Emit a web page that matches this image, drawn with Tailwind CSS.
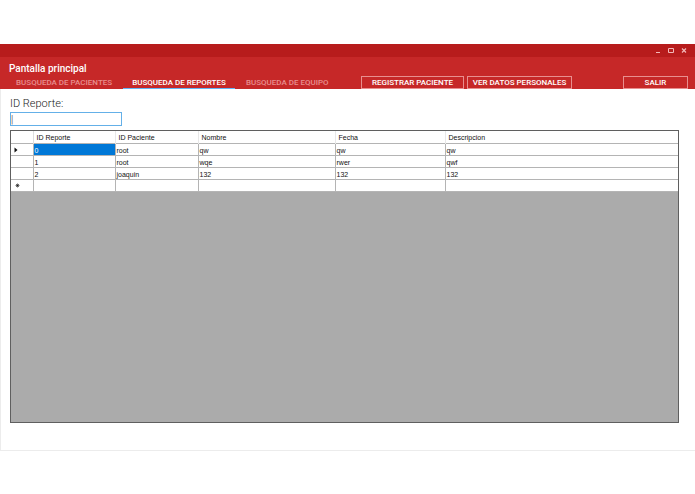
<!DOCTYPE html>
<html lang="es">

<head>
  <meta charset="UTF-8" />
  <meta name="viewport" content="width=device-width, initial-scale=1.0" />
  <title>Pantalla principal</title>
  <script src="https://cdn.jsdelivr.net/npm/@tailwindcss/browser@4"></script>
</head>

<body class="flex h-screen flex-col bg-white pt-11 pb-[43px] font-['Roboto',sans-serif]">
  <div class="flex min-h-0 flex-1 flex-col border-b border-[#ececec]">

    <!-- Title bar -->
    <div class="flex h-[13px] shrink-0 items-center justify-end gap-1 bg-[#b71c1c] pr-[6px] text-[#f3b9b9]">
      <button type="button" aria-label="Minimizar" class="flex w-[9px] justify-center">
        <svg width="7" height="7" viewBox="0 0 7 7" fill="none" stroke="currentColor" stroke-width="1"><path d="M1 5.5h4" /></svg>
      </button>
      <button type="button" aria-label="Maximizar" class="flex w-[9px] justify-center">
        <svg width="7" height="7" viewBox="0 0 7 7" fill="none" stroke="currentColor" stroke-width="1"><path d="M.5 1.5h5v4h-5z" /></svg>
      </button>
      <button type="button" aria-label="Cerrar" class="flex w-[9px] justify-center">
        <svg width="7" height="7" viewBox="0 0 7 7" fill="none" stroke="currentColor" stroke-width="1.2"><path d="M1 1.500l4 4M5 1.500l-4 4" /></svg>
      </button>
    </div>

    <!-- Header -->
    <header class="shrink-0 bg-[#c62828] text-white">
      <h1 class="pt-1 pl-[9px] text-[10px] leading-[15px] font-medium">Pantalla principal</h1>
      <div class="flex h-[13px] justify-between pr-[7px] text-[8px] leading-[13px] font-medium">
        <nav class="flex gap-[2px] pl-[7px] whitespace-nowrap">
          <a href="#" class="px-[9px] text-[#e88f8f]">BUSQUEDA DE PACIENTES</a>
          <a href="#" class="border-b border-[#64b5f6] px-[9px]">BUSQUEDA DE REPORTES</a>
          <a href="#" class="px-[9px] text-[#e88f8f]">BUSQUEDA DE EQUIPO</a>
        </nav>
        <div class="flex whitespace-nowrap">
          <button type="button" class="mr-[3px] w-[103px] border border-[#e88f8f] leading-[11px]">REGISTRAR PACIENTE</button>
          <button type="button" class="mr-[51px] w-[105px] border border-[#e88f8f] leading-[11px]">VER DATOS PERSONALES</button>
          <button type="button" class="w-[65px] border border-[#e88f8f] leading-[11px]">SALIR</button>
        </div>
      </div>
    </header>

    <main class="flex min-h-0 flex-1 flex-col border-l border-[#ececec] pt-[7px] pr-4 pb-[27px] pl-[9px]">
      <label for="idReporte" class="text-[11px] leading-[15px] font-light text-[#212121]">ID Reporte:</label>
      <input id="idReporte" type="text" value="|" class="mt-px h-[14px] w-28 border border-[#64b0e8] bg-white text-[10px] leading-3 font-light text-[#212121] outline-none" />

      <!-- Data grid -->
      <div class="mt-1 min-h-0 flex-1 border border-[#5f5f5f] bg-[#ababab]">
        <table class="w-full table-fixed border-collapse bg-white text-left font-['Liberation_Sans',sans-serif] text-[7px] leading-[8px] text-[#111]">
          <colgroup>
            <col class="w-[22px]" />
            <col class="w-[82px]" />
            <col class="w-[83px]" />
            <col class="w-[137px]" />
            <col class="w-[110px]" />
            <col />
          </colgroup>
          <thead>
            <tr class="h-3 border-b border-[#b4b4b4]">
              <th class="border-r border-[#dedede] p-0"></th>
              <th class="border-r border-[#e8e8e8] pt-[3px] pr-0 pb-0 pl-[3px] font-normal">ID Reporte</th>
              <th class="border-r border-[#e8e8e8] pt-[3px] pr-0 pb-0 pl-[3px] font-normal">ID Paciente</th>
              <th class="border-r border-[#e8e8e8] pt-[3px] pr-0 pb-0 pl-[3px] font-normal">Nombre</th>
              <th class="border-r border-[#e8e8e8] pt-[3px] pr-0 pb-0 pl-[3px] font-normal">Fecha</th>
              <th class="pt-[3px] pr-0 pb-0 pl-[3px] font-normal">Descripcion</th>
            </tr>
          </thead>
          <tbody>
            <tr class="h-3 border-b border-[#b4b4b4]">
              <td class="border-r border-[#b4b4b4] pt-px pr-0 pb-0 pl-[3px]">
                <svg width="4" height="6" viewBox="0 0 4 6" fill="currentColor"><path d="M.5 .5l3 2.500-3 2.500z" /></svg>
              </td>
              <td class="border-r border-[#b4b4b4] bg-[#0078d7] pt-[3px] pr-0 pb-0 pl-px text-white">0</td>
              <td class="border-r border-[#b4b4b4] pt-[3px] pr-0 pb-0 pl-px">root</td>
              <td class="border-r border-[#b4b4b4] pt-[3px] pr-0 pb-0 pl-px">qw</td>
              <td class="border-r border-[#b4b4b4] pt-[3px] pr-0 pb-0 pl-px">qw</td>
              <td class="pt-[3px] pr-0 pb-0 pl-px">qw</td>
            </tr>
            <tr class="h-3 border-b border-[#b4b4b4]">
              <td class="border-r border-[#b4b4b4] p-0"></td>
              <td class="border-r border-[#b4b4b4] pt-[3px] pr-0 pb-0 pl-px">1</td>
              <td class="border-r border-[#b4b4b4] pt-[3px] pr-0 pb-0 pl-px">root</td>
              <td class="border-r border-[#b4b4b4] pt-[3px] pr-0 pb-0 pl-px">wqe</td>
              <td class="border-r border-[#b4b4b4] pt-[3px] pr-0 pb-0 pl-px">rwer</td>
              <td class="pt-[3px] pr-0 pb-0 pl-px">qwf</td>
            </tr>
            <tr class="h-3 border-b border-[#b4b4b4]">
              <td class="border-r border-[#b4b4b4] p-0"></td>
              <td class="border-r border-[#b4b4b4] pt-[3px] pr-0 pb-0 pl-px">2</td>
              <td class="border-r border-[#b4b4b4] pt-[3px] pr-0 pb-0 pl-px">joaquin</td>
              <td class="border-r border-[#b4b4b4] pt-[3px] pr-0 pb-0 pl-px">132</td>
              <td class="border-r border-[#b4b4b4] pt-[3px] pr-0 pb-0 pl-px">132</td>
              <td class="pt-[3px] pr-0 pb-0 pl-px">132</td>
            </tr>
            <tr class="h-3 border-b border-[#b4b4b4]">
              <td class="border-r border-[#b4b4b4] pt-px pr-0 pb-0 pl-1">
                <svg width="5" height="5" viewBox="0 0 5 5" fill="none" stroke="currentColor"><path d="M2.500 .5v4M.5 2.500h4M1 1l3 3M4 1l-3 3" stroke-width=".6" /></svg>
              </td>
              <td class="border-r border-[#b4b4b4] p-0"></td>
              <td class="border-r border-[#b4b4b4] p-0"></td>
              <td class="border-r border-[#b4b4b4] p-0"></td>
              <td class="border-r border-[#b4b4b4] p-0"></td>
              <td class="p-0"></td>
            </tr>
          </tbody>
        </table>
      </div>
    </main>
  </div>
</body>

</html>
